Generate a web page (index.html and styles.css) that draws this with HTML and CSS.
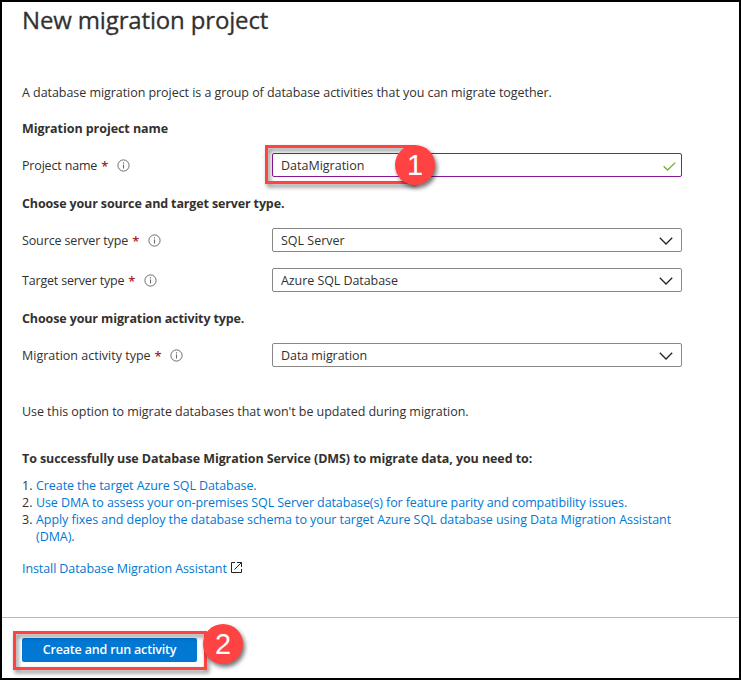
FILE: index.html
```html
<!DOCTYPE html>
<html lang="en">
<head>
<meta charset="utf-8">
<title>New migration project</title>
<link rel="stylesheet" href="styles.css">
</head>
<body>
<svg class="defs" width="0" height="0" aria-hidden="true">
  <symbol id="info" viewBox="0 0 13 13"><circle cx="6.5" cy="6.5" r="5.6" fill="none" stroke="#6b6b6b"/><path d="M6.5 5.4V9.4M6.5 3.3V4.5" fill="none" stroke="#6b6b6b" stroke-width="1.1"/></symbol>
  <symbol id="chevron" viewBox="0 0 14 8"><path d="M.8 .8 7 7 13.200 .8" fill="none" stroke="#222" stroke-width="1.3"/></symbol>
</svg>
<main class="panel">
  <h1 class="title"><span>New migration project</span></h1>
  <form class="content">
    <p class="intro"><span>A database migration project is a group of database activities that you can migrate together.</span></p>
    <h2 class="section first"><span class="h-name">Migration project name</span></h2>
    <div class="field">
      <label><span class="l-project">Project name</span><b class="star">*</b><svg class="info"><use href="#info"/></svg></label>
      <div class="box active"><span class="v-name">DataMigration</span>
        <svg class="check" viewBox="0 0 13 9"><path d="M.6 4.300 4.500 8 12.300 .6" fill="none" stroke="#73b02c" stroke-width="1.3"/></svg>
        <div class="frame frame-name"></div><div class="badge badge-one">1</div>
      </div>
    </div>
    <h2 class="section"><span class="h-server">Choose your source and target server type.</span></h2>
    <div class="field">
      <label><span class="l-source">Source server type</span><b class="star">*</b><svg class="info"><use href="#info"/></svg></label>
      <div class="box"><span class="v-source">SQL Server</span><svg class="chevron"><use href="#chevron"/></svg></div>
    </div>
    <div class="field">
      <label><span class="l-target">Target server type</span><b class="star">*</b><svg class="info"><use href="#info"/></svg></label>
      <div class="box"><span class="v-target">Azure SQL Database</span><svg class="chevron"><use href="#chevron"/></svg></div>
    </div>
    <h2 class="section"><span class="h-activity">Choose your migration activity type.</span></h2>
    <div class="field">
      <label><span class="l-activity">Migration activity type</span><b class="star">*</b><svg class="info"><use href="#info"/></svg></label>
      <div class="box"><span class="v-activity">Data migration</span><svg class="chevron"><use href="#chevron"/></svg></div>
    </div>
    <p class="hint"><span>Use this option to migrate databases that won't be updated during migration.</span></p>
    <h2 class="section needs"><span class="h-needs">To successfully use Database Migration Service (DMS) to migrate data, you need to:</span></h2>
    <div class="steps">
      <span>1.</span><a class="s-one">Create the target Azure SQL Database.</a>
      <span>2.</span><a class="s-two">Use DMA to assess your on-premises SQL Server database(s) for feature parity and compatibility issues.</a>
      <span>3.</span><a class="s-three">Apply fixes and deploy the database schema to your target Azure SQL database using Data Migration Assistant<br>(DMA).</a>
    </div>
    <p class="install"><a>Install Database Migration Assistant</a><svg class="external" viewBox="0 0 11 11"><path d="M4 .5H.5V10.500H10.500V7M6 .5H10.500V5M10.300 .7 3.500 7.500" fill="none" stroke="#222"/></svg></p>
  </form>
  <footer class="footer">
    <div class="action"><button class="primary"><span>Create and run activity</span></button>
      <div class="frame frame-run"></div><div class="badge badge-two">2</div>
    </div>
  </footer>
</main>
</body>
</html>
```
FILE: styles.css
```css
* { box-sizing: border-box; }
body { margin: 0; font: 12.5px/18px "Open Sans", "Noto Sans", sans-serif; color: #323130; background: #fff; }
h1, h2, p { margin: 0; }
.defs { position: absolute; }
.panel { width: 741px; height: 680px; border: 2px solid #000; display: flex; flex-direction: column; }
.title { height: 38px; padding-left: 20px; font-size: 24px; line-height: 36px; font-weight: 400; white-space: nowrap; -webkit-text-stroke: .3px #323130; letter-spacing: -.15px; }
.content { flex: 1; padding: 43px 57px 0 20px; white-space: nowrap; }
.intro, .hint, .section, .install { height: 18px; }
.intro, .hint { line-height: 20px; letter-spacing: -.053px; }
.section { font-size: 12.5px; line-height: 20px; font-weight: 700; margin-top: 17px; }
.section.first { margin-top: 18px; }
.field { display: flex; height: 24px; margin-top: 16px; align-items: center; }
label { width: 250px; display: flex; align-items: center; padding-top: 2px; }
.star { color: #a4262c; margin-left: 4px; font-weight: 600; font-size: 13px; }
.info { width: 13px; height: 13px; margin: -1px 0 0 8.5px; }
.box { position: relative; width: 410px; height: 24px; border: 1px solid #8a8886; border-radius: 2px; display: flex; align-items: center; justify-content: space-between; padding: 2px 8px 0; }
.box.active { border-color: #881798; padding-right: 5px; }
.chevron { width: 14px; height: 8px; }
.check { width: 13px; height: 9px; }
.h-name { letter-spacing: -.06px; }
.h-server { letter-spacing: -.14px; }
.h-activity { letter-spacing: -.12px; }
.h-needs { letter-spacing: -.08px; }
.l-project { letter-spacing: -.17px; }
.l-source { letter-spacing: -.13px; }
.l-target { letter-spacing: -.18px; }
.v-target, .v-activity { letter-spacing: -.07px; }
.s-one { letter-spacing: -.08px; }
.s-two { letter-spacing: -.1px; }
.s-three { letter-spacing: -.06px; }
.hint { margin-top: 35px; }
.section.needs { margin-top: 29px; }
.steps { margin-top: 10px; display: grid; grid-template-columns: 14px 1fr; line-height: 17px; }
a { color: #0078d4; }
.install { margin-top: 15px; display: flex; align-items: center; letter-spacing: -.09px; }
.external { width: 11px; height: 11px; margin: -3px 0 0 4px; }
.footer { height: 61px; border-top: 1px solid #b8b8b8; padding: 20px; }
.action { position: relative; width: 175px; height: 24px; }
.primary { width: 175px; height: 24px; border: 0; border-radius: 2px; padding: 0; background: #0078d4; color: #fff; font: 600 12.5px/24px "Open Sans", sans-serif; letter-spacing: -.17px; white-space: nowrap; }
.frame { position: absolute; border: 3px solid #ff4343; filter: drop-shadow(2px 3px 2px rgba(0,0,0,.5)); }
.frame-name { left: -8px; top: -9px; width: 150px; height: 39px; }
.frame-run { left: -9px; top: -7px; width: 194px; height: 39px; }
.badge { position: absolute; width: 40px; height: 40px; border-radius: 50%; background: #ff4343; color: #fff; font: 29px/40px "Liberation Sans", sans-serif; text-align: center; box-shadow: 2px 3px 4px rgba(0,0,0,.55); }
.badge-one { left: 122px; top: -9px; }
.badge-two { left: 181px; top: -14px; }
```
